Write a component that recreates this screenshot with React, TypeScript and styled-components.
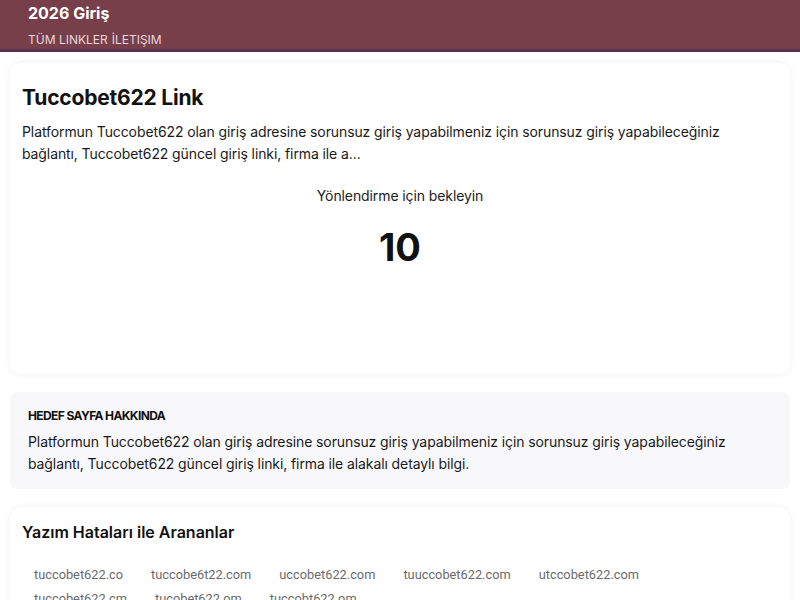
import React from "react";
import styled, { createGlobalStyle } from "styled-components";

const Global = createGlobalStyle`
  html, body { margin: 0; padding: 0; background: #ffffff; }
  body { font-family: Inter, "Noto Sans", sans-serif; color: #111; }
  * { box-sizing: border-box; }
`;

const Header = styled.header`
  background: #763f4a;
  border-bottom: 3px solid #55324d;
  padding: 3px 28px 1px;
  display: flex;
  flex-direction: column;
`;

const Brand = styled.div`
  color: #ffffff;
  font-size: 16px;
  font-weight: 700;
  line-height: 20px;
`;

const Nav = styled.nav`
  display: flex;
  gap: 4px;
  margin-top: 9px;
`;

const NavLink = styled.a`
  color: #ecd6dd;
  font-size: 12px;
  line-height: 16px;
  text-decoration: none;
`;

const Main = styled.main`
  padding: 11px 10px 0;
  display: flex;
  flex-direction: column;
  gap: 18px;
`;

const Card = styled.section`
  background: #ffffff;
  border-radius: 12px;
  box-shadow: 0 0 8px rgba(0, 0, 0, 0.06);
  padding: 20px 12px;
`;

const LinkCard = styled(Card)`
  height: 311px;
`;

const Title = styled.h1`
  margin: 0;
  font-size: 21px;
  font-weight: 700;
  line-height: 30px;
  letter-spacing: -0.2px;
`;

const Para = styled.p`
  margin: 8px 0 0;
  font-size: 14px;
  line-height: 22px;
  letter-spacing: -0.1px;
  color: #1a1a1a;
`;

const Wait = styled.div`
  margin-top: 21px;
  text-align: center;
  font-size: 14px;
  line-height: 20px;
  letter-spacing: -0.1px;
  color: #222;
`;

const Count = styled.div`
  margin-top: 19px;
  text-align: center;
  font-size: 38px;
  font-weight: 700;
  line-height: 44px;
  color: #111;
`;

const InfoBox = styled.section`
  background: #f8f8fb;
  border-radius: 8px;
  padding: 16px 18px 14px;
`;

const InfoLabel = styled.h2`
  margin: 0;
  font-size: 12px;
  font-weight: 700;
  line-height: 16px;
  text-transform: uppercase;
  letter-spacing: -0.6px;
`;

const InfoText = styled.p`
  margin: 7px 0 0;
  font-size: 14px;
  line-height: 22px;
  letter-spacing: -0.1px;
  color: #1a1a1a;
`;

const SectionTitle = styled.h3`
  margin: 0;
  font-size: 16px;
  font-weight: 600;
  line-height: 20px;
`;

const Chips = styled.div`
  display: flex;
  flex-wrap: wrap;
  column-gap: 4px;
  max-width: 680px;
  margin-top: 21px;
`;

const Chip = styled.span`
  padding: 3px 12px;
  font-family: Roboto, "Liberation Sans", sans-serif;
  font-size: 12.8px;
  line-height: 18px;
  color: #6b6b6b;
`;

const TyposCard = styled(Card)`
  padding-top: 15px;
`;

const typos = [
  "tuccobet622.co",
  "tuccobe6t22.com",
  "uccobet622.com",
  "tuuccobet622.com",
  "utccobet622.com",
  "tuccobet622.cm",
  "tucobet622.om",
  "tuccobt622.om",
];

export default function App() {
  return (
    <>
      <Global />
      <Header>
        <Brand>2026 Giriş</Brand>
        <Nav>
          <NavLink>TÜM LINKLER</NavLink>
          <NavLink>İLETIŞIM</NavLink>
        </Nav>
      </Header>
      <Main>
        <LinkCard>
          <Title>Tuccobet622 Link</Title>
          <Para>
            Platformun Tuccobet622 olan giriş adresine sorunsuz giriş yapabilmeniz için sorunsuz giriş
            yapabileceğiniz bağlantı, Tuccobet622 güncel giriş linki, firma ile a...
          </Para>
          <Wait>Yönlendirme için bekleyin</Wait>
          <Count>10</Count>
        </LinkCard>
        <InfoBox>
          <InfoLabel>Hedef Sayfa Hakkında</InfoLabel>
          <InfoText>
            Platformun Tuccobet622 olan giriş adresine sorunsuz giriş yapabilmeniz için sorunsuz giriş
            yapabileceğiniz bağlantı, Tuccobet622 güncel giriş linki, firma ile alakalı detaylı bilgi.
          </InfoText>
        </InfoBox>
        <TyposCard>
          <SectionTitle>Yazım Hataları ile Arananlar</SectionTitle>
          <Chips>
            {typos.map((t) => (
              <Chip key={t}>{t}</Chip>
            ))}
          </Chips>
        </TyposCard>
      </Main>
    </>
  );
}
